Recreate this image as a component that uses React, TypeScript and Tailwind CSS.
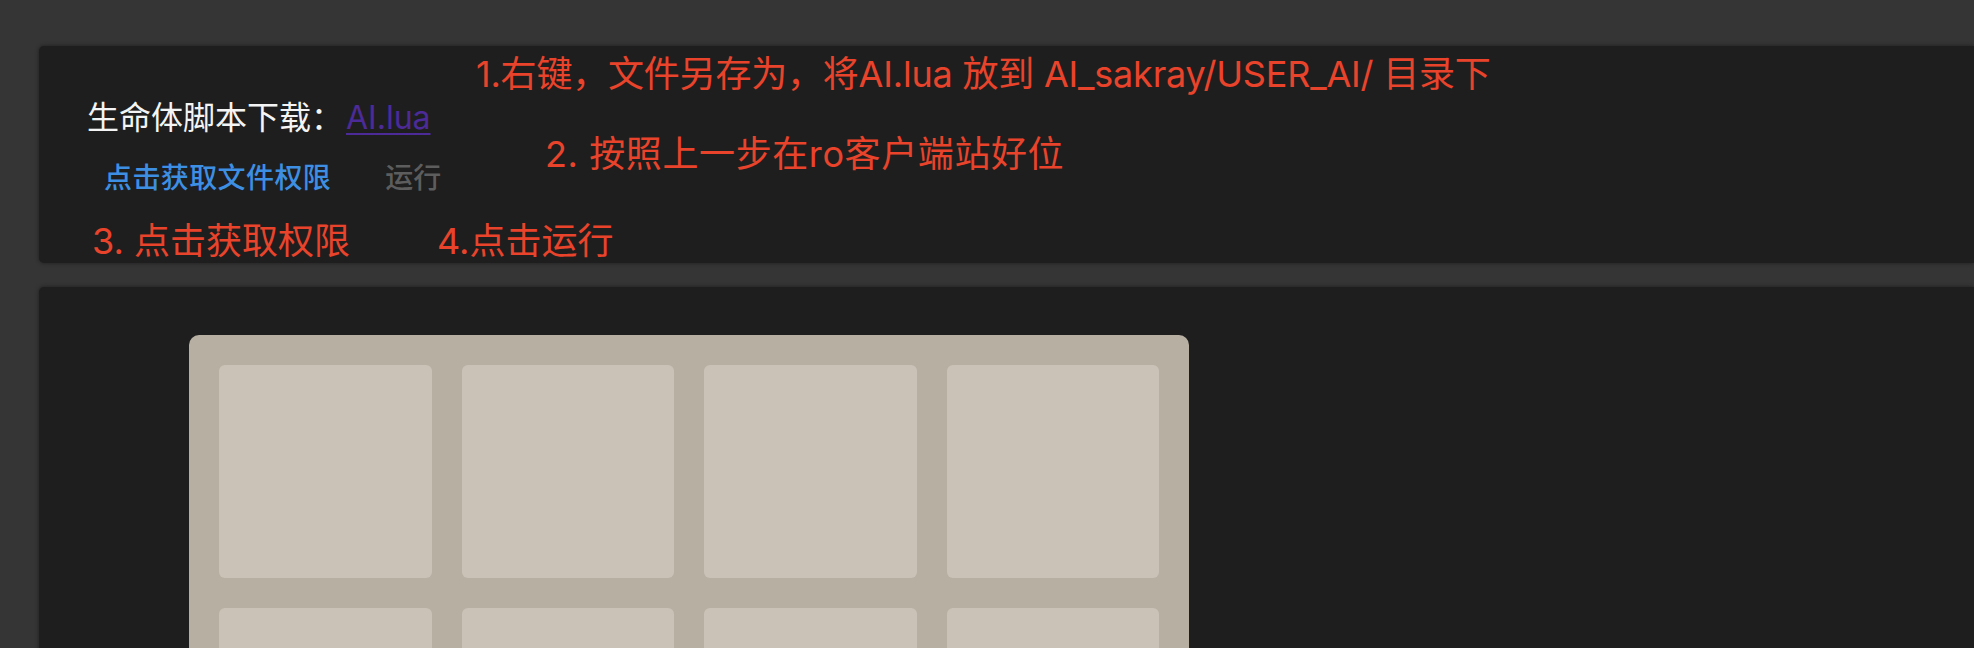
import React from 'react';

const cells = Array.from({ length: 8 });

export default function App() {
  return (
    <div
      className="h-[648px] overflow-hidden bg-[#353535] pt-[46px] pl-[39px]"
      style={{ fontFamily: 'Inter, "Noto Sans CJK SC", sans-serif' }}
    >
      {/* download card */}
      <div className="relative h-[217px] rounded-l-[5px] bg-[#1e1e1e] pl-[48px] pt-[50px] shadow-[0_0_4px_rgba(0,0,0,0.45)]">
        <div className="flex items-center text-[32px] leading-[44px] text-[#f4f4f4]">
          <span>生命体脚本下载：</span>
          <a href="#" className="ml-[3px] text-[#4c2a98] underline decoration-[2px] underline-offset-[4px]">
            AI.lua
          </a>
        </div>
        <div className="mt-[20px] ml-[17px] flex items-center gap-[54px] text-[28px] leading-[36px] font-medium">
          <button className="text-[#3d8fe3] tracking-[0.4px]">点击获取文件权限</button>
          <button className="text-[#5d5d5d]">运行</button>
        </div>

        {/* red annotations */}
        <div className="absolute left-[437px] top-[6px] text-[36px] leading-[44px] tracking-[-0.2px] text-[#e9442b] whitespace-nowrap">
          1.右键，文件另存为，将AI.lua 放到 AI_sakray/USER_AI/ 目录下
        </div>
        <div className="absolute left-[506px] top-[86px] text-[36px] leading-[44px] tracking-[0.6px] text-[#e9442b] whitespace-nowrap">
          2. 按照上一步在ro客户端站好位
        </div>
        <div className="absolute left-[53px] top-[173px] text-[36px] leading-[44px] text-[#e9442b] whitespace-nowrap">
          3. 点击获取权限
        </div>
        <div className="absolute left-[398px] top-[173px] text-[36px] leading-[44px] text-[#e9442b] whitespace-nowrap">
          4.点击运行
        </div>
      </div>

      {/* inventory card */}
      <div className="mt-[24px] h-[600px] rounded-l-[5px] bg-[#1e1e1e] pl-[150px] pt-[48px] shadow-[0_0_4px_rgba(0,0,0,0.45)]">
        <div className="grid w-[1000px] grid-cols-4 gap-[30px] rounded-[10px] bg-[#b8afa3] p-[30px]">
          {cells.map((_, i) => (
            <div key={i} className="h-[213px] rounded-[6px] bg-[#cbc2b7]" />
          ))}
        </div>
      </div>
    </div>
  );
}
